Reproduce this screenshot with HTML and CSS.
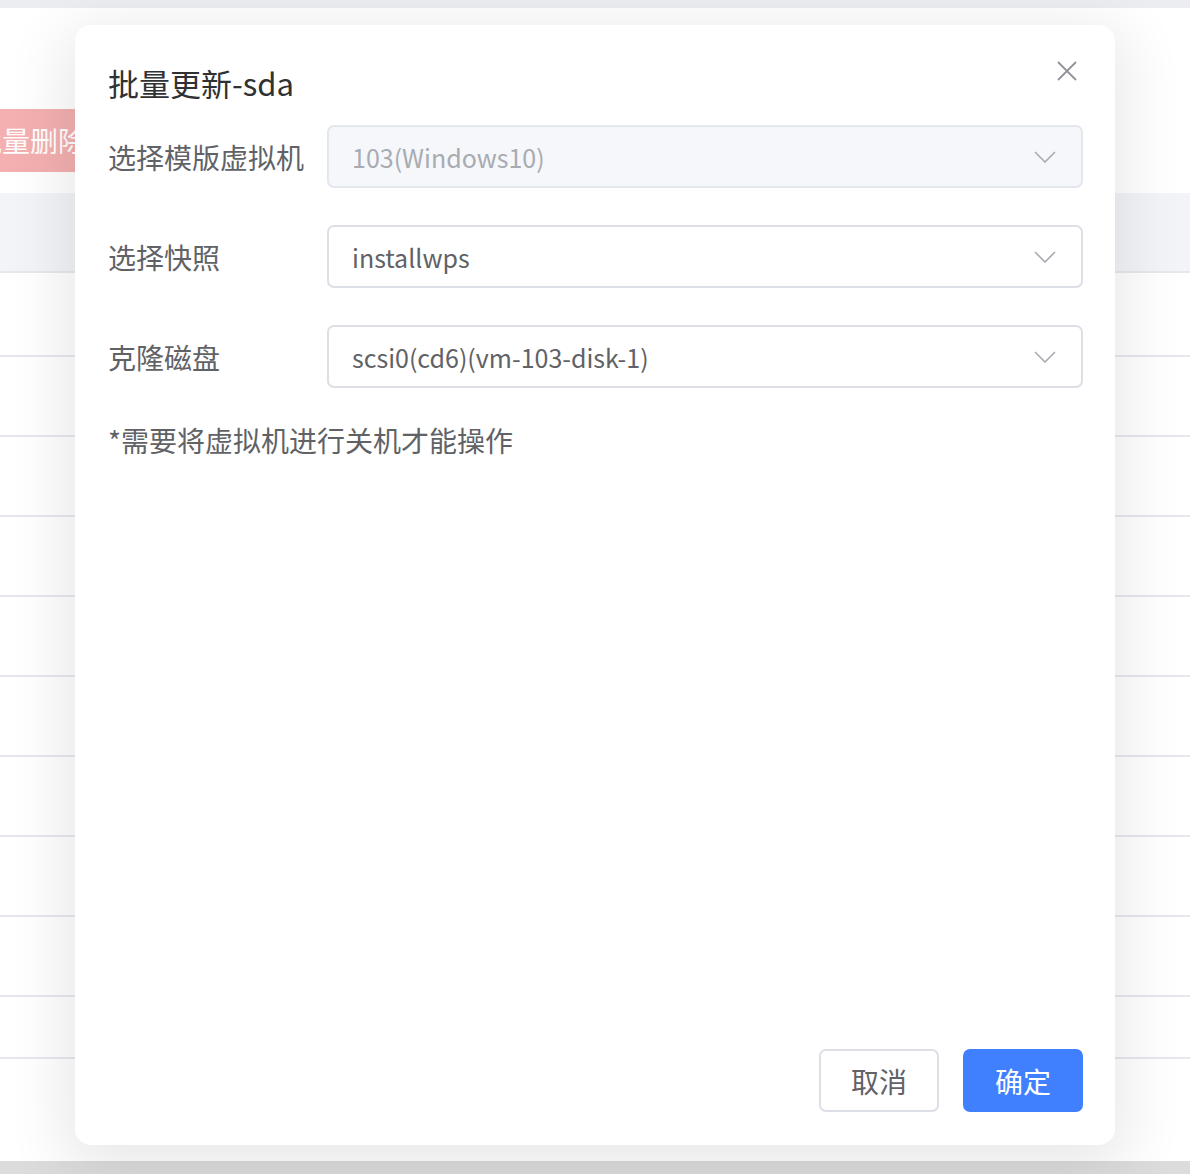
FILE: index.html
```html
<!DOCTYPE html>
<html lang="zh-CN">
<head>
<meta charset="utf-8">
<title>批量更新-sda</title>
<link rel="stylesheet" href="styles.css">
</head>
<body>
<div class="page">
  <div class="topbar"></div>
  <div class="toolbar">
    <span class="btn-danger">批量删除</span>
  </div>
  <div class="table">
    <div class="thead"></div>
    <div class="row first"><span class="cell">0</span></div>
    <div class="row"><span class="cell">0</span></div>
    <div class="row"><span class="cell">0</span></div>
    <div class="row"><span class="cell">0</span></div>
    <div class="row"><span class="cell">0</span></div>
    <div class="row"><span class="cell">0</span></div>
    <div class="row"><span class="cell">0</span></div>
    <div class="row"><span class="cell">0</span></div>
    <div class="row"><span class="cell">0</span></div>
    <div class="row last"><span class="cell">0</span></div>
  </div>
  <div class="bottombar"></div>
</div>

<div class="dialog">
  <div class="dialog-header">
    <span class="dialog-title">批量更新-sda</span>
    <span class="close">
      <svg width="20" height="20" viewBox="0 0 20 20"><path d="M1 1L19 19M19 1L1 19" stroke="#909399" stroke-width="1.8" fill="none"/></svg>
    </span>
  </div>
  <div class="form">
    <div class="form-row">
      <label class="form-label">选择模版虚拟机</label>
      <div class="select disabled">
        <span class="select-text">103(Windows10)</span>
        <svg class="chev" width="22" height="12" viewBox="0 0 22 12"><path d="M1 1L11 11L21 1" stroke="#a8abb2" stroke-width="1.6" fill="none"/></svg>
      </div>
    </div>
    <div class="form-row">
      <label class="form-label">选择快照</label>
      <div class="select">
        <span class="select-text">installwps</span>
        <svg class="chev" width="22" height="12" viewBox="0 0 22 12"><path d="M1 1L11 11L21 1" stroke="#a8abb2" stroke-width="1.6" fill="none"/></svg>
      </div>
    </div>
    <div class="form-row">
      <label class="form-label">克隆磁盘</label>
      <div class="select">
        <span class="select-text">scsi0(cd6)(vm-103-disk-1)</span>
        <svg class="chev" width="22" height="12" viewBox="0 0 22 12"><path d="M1 1L11 11L21 1" stroke="#a8abb2" stroke-width="1.6" fill="none"/></svg>
      </div>
    </div>
    <p class="note">*需要将虚拟机进行关机才能操作</p>
  </div>
  <div class="dialog-footer">
    <button class="btn btn-default">取消</button>
    <button class="btn btn-primary">确定</button>
  </div>
</div>
</body>
</html>
```

FILE: styles.css
```css
* { box-sizing: border-box; }
html, body {
  margin: 0;
  padding: 0;
  width: 1190px;
  height: 1174px;
  overflow: hidden;
  background: #ffffff;
  font-family: "Noto Sans CJK SC", "Noto Sans", sans-serif;
}
.page {
  width: 1190px;
  height: 1174px;
  display: flex;
  flex-direction: column;
}
.topbar {
  height: 8px;
  background: #ebedf0;
  flex: none;
}
.toolbar {
  height: 185px;
  padding-top: 101px;
  flex: none;
}
.btn-danger {
  display: inline-block;
  margin-left: -46px;
  height: 63px;
  line-height: 63px;
  padding: 0 20px;
  background: #f4b0b0;
  color: #ffffff;
  font-size: 28px;
  border-radius: 6px;
}
.table {
  flex: 1;
  display: flex;
  flex-direction: column;
}
.thead {
  height: 80px;
  background: #f3f4f8;
  border-bottom: 2px solid #e6e8ee;
  flex: none;
}
.row {
  height: 80px;
  border-bottom: 2px solid #e6e8ee;
  display: flex;
  align-items: center;
  flex: none;
}
.row.first { height: 84px; }
.row.last { height: 62px; padding-top: 18px; }
.cell {
  margin-left: -12px;
  font-size: 22px;
  color: #c0c4cc;
}
.bottombar {
  height: 13px;
  background: #dcdcdc;
  flex: none;
  margin-top: auto;
}

.dialog {
  position: absolute;
  left: 75px;
  top: 25px;
  width: 1040px;
  height: 1120px;
  background: #ffffff;
  border-radius: 16px;
  box-shadow: 0 14px 60px 12px rgba(0, 0, 0, 0.09);
  padding: 38px 32px 33px 33px;
  display: flex;
  flex-direction: column;
}
.dialog-header {
  display: flex;
  justify-content: space-between;
  align-items: flex-start;
  height: 40px;
}
.dialog-title {
  font-size: 31px;
  line-height: 40px;
  color: #303133;
}
.close {
  margin-top: -2px;
  margin-right: 6px;
  width: 20px;
  height: 20px;
  display: block;
}
.close svg { display: block; }
.form {
  margin-top: 22px;
  display: flex;
  flex-direction: column;
  gap: 37px;
}
.form-row {
  display: flex;
  align-items: center;
}
.form-label {
  width: 219px;
  flex: none;
  font-size: 28px;
  color: #606266;
}
.select {
  flex: 1;
  height: 63px;
  border: 2px solid #dcdfe6;
  border-radius: 7px;
  display: flex;
  align-items: center;
  justify-content: space-between;
  padding: 0 25px 0 23px;
}
.select.disabled {
  background: #f5f7fa;
  border-color: #e4e7ed;
}
.select-text {
  font-size: 25px;
  color: #606266;
}
.select.disabled .select-text { color: #a8abb2; }
.chev { display: block; }
.note {
  margin: 0;
  margin-top: -5px;
  font-size: 28px;
  line-height: 40px;
  color: #606266;
}
.dialog-footer {
  margin-top: auto;
  display: flex;
  justify-content: flex-end;
  gap: 24px;
}
.btn {
  width: 120px;
  height: 63px;
  border-radius: 7px;
  font-family: "Noto Sans CJK SC", "Noto Sans", sans-serif;
  font-size: 28px;
  padding: 0;
  cursor: pointer;
}
.btn-default {
  background: #ffffff;
  border: 2px solid #dcdfe6;
  color: #606266;
}
.btn-primary {
  background: #4080ff;
  border: 2px solid #4080ff;
  color: #ffffff;
}
```
